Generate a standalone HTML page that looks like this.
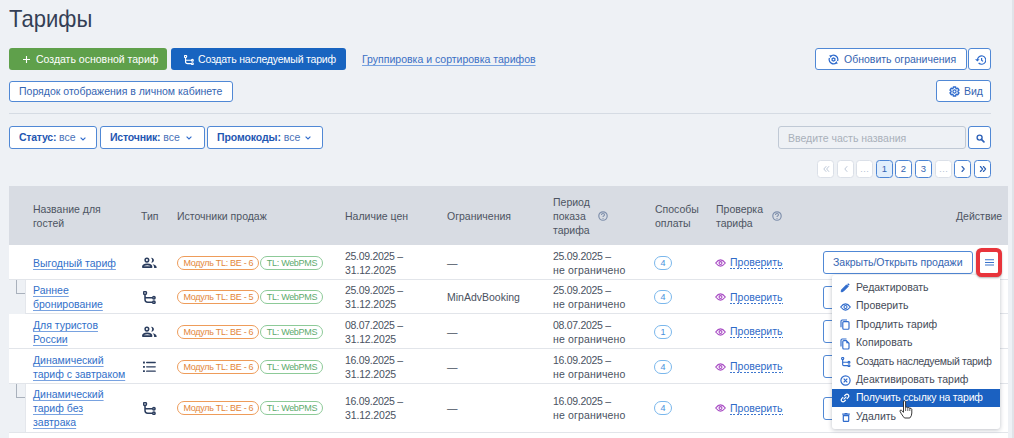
<!DOCTYPE html>
<html><head><meta charset="utf-8">
<style>
*{box-sizing:border-box;margin:0;padding:0}
html,body{width:1014px;height:438px;overflow:hidden;background:#eef1f5;font-family:"Liberation Sans",sans-serif;font-size:10.5px;color:#3b4453}
.a{position:absolute}
.btn{position:absolute;border-radius:3px;white-space:nowrap;line-height:14px}
.btn>span{position:absolute}
.btn>svg{position:absolute;display:block}
.ob{background:#fff;border:1px solid #5088d5;color:#3565b2}
.sep{position:absolute;height:1px;background:#d5dbe3}
.pg{position:absolute;top:160px;width:17px;height:18px;border:1px solid #4d85d4;border-radius:3.5px;background:#fff;color:#3565b2;font-size:9.5px;display:flex;align-items:center;justify-content:center;line-height:10px}
.pg.dis{border-color:#dbe0e8;color:#b4c1d3}
.pg.act{background:#e1eefc}
.th{position:absolute;color:#4d5462;line-height:14px;white-space:nowrap}
.row{position:absolute;left:9px;width:999px;background:#fff;border-bottom:1px solid #e2e5ea}
.row.child{left:25px;width:983px;border-left:1px solid #e4e7ec}
.cell{position:absolute;display:flex;align-items:center;line-height:14px;white-space:nowrap}
.lnk{color:#3270c9;text-decoration:underline;text-decoration-color:#78a2e0;text-decoration-thickness:1.2px;text-underline-offset:1.5px;text-decoration-skip-ink:none}
.bdg{display:inline-flex;align-items:center;height:14px;border-radius:7px;font-size:9px;letter-spacing:-0.3px;padding:0 5px 0 5.5px;margin-right:1px;line-height:12px}
.bo{border:1px solid #ee9c5a;color:#e3863a}
.bgn{border:1px solid #8dca98;color:#5daa6c}
.pay{display:inline-flex;align-items:center;justify-content:center;width:18px;height:14px;border:1px solid #7ab7ec;border-radius:7px;color:#4791dc;font-size:9px}
.chk{color:#2f6bc8;line-height:13px;margin-left:4px;padding-bottom:0px;background:repeating-linear-gradient(90deg,#3f78cf 0 2px,transparent 2px 3.5px) left bottom/100% 1px no-repeat}
.conn{position:absolute;left:16px;width:10px;height:14px;border-left:1px solid #a9b1bc;border-bottom:1px solid #a9b1bc}
.menu{position:absolute;left:832px;top:275px;width:168px;height:153.5px;background:#fff;border-radius:3px;box-shadow:0 1px 4px rgba(40,50,70,.3)}
.mi{position:absolute;left:0;width:168px;height:18px;color:#454b58;white-space:nowrap}
.mi svg{position:absolute;display:block}
.mi span{position:absolute;left:24px;top:1.3px;line-height:14px}
.mi.hl{background:#1b61c1;color:#fff}
</style></head><body>

<div class="a" style="left:9.4px;top:3.5px;font-size:24px;color:#343f55;line-height:30px;transform:scaleX(.918);transform-origin:0 0">Тарифы</div>

<div class="btn" style="left:9px;top:48px;width:158px;height:22px;background:#5fa04b;color:#fff">
  <svg style="left:13.5px;top:7.5px" width="7" height="7" viewBox="0 0 7 7"><path d="M3.5 0V7M0 3.5H7" stroke="#fff" stroke-width="1.1"/></svg>
  <span style="left:27px;top:4px">Создать основной тариф</span>
</div>
<div class="btn" style="left:171px;top:48px;width:175px;height:22px;background:#1864c0;color:#fff">
  <span style="left:13px;top:6.5px"><svg width="10" height="10" viewBox="0 0 13 13" style="display:block"><g fill="none" stroke="#fff" stroke-width="1.5"><circle cx="2" cy="2" r="1.5"/><path d="M2 3.5V8.6Q2 11.3 4.7 11.3H9.6M2 5.6Q2 6.8 3.2 6.8H9.6"/><circle cx="10.9" cy="6.8" r="1.2"/><circle cx="10.9" cy="11.3" r="1.2"/></g></svg></span>
  <span style="left:27px;top:4px;letter-spacing:-0.2px">Создать наследуемый тариф</span>
</div>
<div class="a lnk" style="left:362px;top:52px;line-height:14px;color:#3a6fc4">Группировка и сортировка тарифов</div>

<div class="btn ob" style="left:815px;top:48px;width:152px;height:22px">
  <svg style="left:12px;top:5px" width="11" height="11" viewBox="0 0 11 11"><g fill="none" stroke="#2f6bcc" stroke-width="1.25"><path d="M2.46 2.46A4.3 4.3 0 0 1 9.54 6.97"/><path d="M8.54 8.54A4.3 4.3 0 0 1 1.46 4.03"/></g><path d="M1.2 1.2L3.9 1.4L2.6 3.9Z M9.8 9.8L7.1 9.6L8.4 7.1Z" fill="#2f6bcc"/><path d="M5.5 3.2L7.5 4.35V6.65L5.5 7.8L3.5 6.65V4.35Z" fill="#2f6bcc"/><circle cx="5.5" cy="5.5" r=".85" fill="#fff"/></svg>
  <span style="left:28px;top:3px">Обновить ограничения</span>
</div>
<div class="btn ob" style="left:968px;top:48px;width:23px;height:22px">
  <svg style="left:6px;top:6px" width="11" height="10" viewBox="0 0 11 10"><g fill="none" stroke="#2f6bcc" stroke-width="1.2"><path d="M2.4 5A4.2 4.2 0 1 1 3.6 8"/><path d="M6.6 3V5.2L8 6.4"/></g><path d="M0 4.2L2.4 6.6L4.6 4.2Z" fill="#2f6bcc"/></svg>
</div>

<div class="btn ob" style="left:9px;top:80.7px;width:223.5px;height:21.5px">
  <span style="left:9px;top:2.6px">Порядок отображения в личном кабинете</span>
</div>
<div class="btn ob" style="left:936px;top:80px;width:55px;height:22px">
  <svg style="left:11.5px;top:5px" width="11" height="11" viewBox="0 0 24 24"><path d="M9.15 4.95 L9.53 2.10 L14.47 2.10 L14.85 4.95 L16.68 6.01 L19.34 4.91 L21.80 9.19 L19.53 10.94 L19.53 13.06 L21.80 14.81 L19.34 19.09 L16.68 17.99 L14.85 19.05 L14.47 21.90 L9.53 21.90 L9.15 19.05 L7.32 17.99 L4.66 19.09 L2.20 14.81 L4.47 13.06 L4.47 10.94 L2.20 9.19 L4.66 4.91 L7.32 6.01Z" fill="none" stroke="#2f6bcc" stroke-width="3" stroke-linejoin="round"/><circle cx="12" cy="12" r="3.4" fill="none" stroke="#2f6bcc" stroke-width="2.6"/></svg>
  <span style="left:27px;top:3px">Вид</span>
</div>

<div class="sep" style="left:9px;top:113px;width:982px"></div>

<div class="btn ob" style="left:9px;top:126px;width:88px;height:23px">
  <span style="left:9px;top:3.3px;color:#1f57b2"><b style="letter-spacing:-0.25px">Статус:</b> <span style="color:#4a72b8">все</span></span>
  <svg style="left:70px;top:9.5px" width="6" height="4" viewBox="0 0 6 4"><path d="M.6 .6L3 3L5.4 .6" fill="none" stroke="#2f6bcc" stroke-width="1.1"/></svg>
</div>
<div class="btn ob" style="left:100px;top:126px;width:105px;height:23px">
  <span style="left:9px;top:3.3px;color:#1f57b2"><b style="letter-spacing:-0.2px">Источник:</b> <span style="color:#4a72b8">все</span></span>
  <svg style="left:84.5px;top:9px" width="6" height="4" viewBox="0 0 6 4"><path d="M.6 .6L3 3L5.4 .6" fill="none" stroke="#2f6bcc" stroke-width="1.1"/></svg>
</div>
<div class="btn ob" style="left:207px;top:126px;width:116px;height:23px">
  <span style="left:9px;top:3.3px;color:#1f57b2"><b style="letter-spacing:-0.1px">Промокоды:</b> <span style="color:#4a72b8">все</span></span>
  <svg style="left:97px;top:9px" width="6" height="4" viewBox="0 0 6 4"><path d="M.6 .6L3 3L5.4 .6" fill="none" stroke="#2f6bcc" stroke-width="1.1"/></svg>
</div>

<div class="btn" style="left:778px;top:126px;width:188px;height:23px;border:1px solid #c0c9d5;background:#eef1f5;color:#a9b0ba">
  <span style="left:9px;top:4px">Введите часть названия</span>
</div>
<div class="btn ob" style="left:968px;top:126px;width:23px;height:23px">
  <svg style="left:6.5px;top:6.5px" width="9" height="9" viewBox="0 0 9 9"><circle cx="3.6" cy="3.6" r="2.5" fill="none" stroke="#2f62b8" stroke-width="1.35"/><path d="M5.4 5.4L7.9 7.9" stroke="#2f62b8" stroke-width="1.7" stroke-linecap="round"/></svg>
</div>

<div class="pg dis" style="left:817px"><svg width="8" height="8" viewBox="0 0 8 8" style="display:block"><path d="M4 1.5L1.8 4L4 6.5M6.8 1.5L4.6 4L6.8 6.5" fill="none" stroke="#b4c1d3" stroke-width="0.9" stroke-linecap="round" stroke-linejoin="round"/></svg></div>
<div class="pg dis" style="left:837px"><svg width="8" height="8" viewBox="0 0 8 8" style="display:block"><path d="M5 1.5L2.8 4L5 6.5" fill="none" stroke="#b4c1d3" stroke-width="0.9" stroke-linecap="round" stroke-linejoin="round"/></svg></div>
<div class="pg dis" style="left:856px">…</div>
<div class="pg act" style="left:876px">1</div>
<div class="pg" style="left:895px">2</div>
<div class="pg" style="left:915px">3</div>
<div class="pg dis" style="left:935px">…</div>
<div class="pg" style="left:954px"><svg width="8" height="8" viewBox="0 0 8 8" style="display:block"><path d="M3 1.5L5.2 4L3 6.5" fill="none" stroke="#2f62b5" stroke-width="1.15" stroke-linecap="round" stroke-linejoin="round"/></svg></div>
<div class="pg" style="left:974px"><svg width="8" height="8" viewBox="0 0 8 8" style="display:block"><path d="M1.4 1.5L3.6 4L1.4 6.5M4.4 1.5L6.6 4L4.4 6.5" fill="none" stroke="#2f62b5" stroke-width="1.15" stroke-linecap="round" stroke-linejoin="round"/></svg></div>

<div class="a" style="left:9px;top:186px;width:999px;height:59.5px;background:#d8dce3"></div>
<div class="th" style="left:33px;top:202px">Название для<br>гостей</div>
<div class="th" style="left:141px;top:209px">Тип</div>
<div class="th" style="left:177px;top:209px">Источники продаж</div>
<div class="th" style="left:345px;top:209px">Наличие цен</div>
<div class="th" style="left:447px;top:209px">Ограничения</div>
<div class="th" style="left:553px;top:195px">Период<br>показа<br>тарифа</div>
<svg class="a" style="left:598px;top:211px" width="10" height="10" viewBox="0 0 10 10"><circle cx="5" cy="5" r="4.2" fill="none" stroke="#7d8eab" stroke-width="1.15"/><path d="M3.5 3.9Q3.5 2.4 5 2.4Q6.5 2.4 6.5 3.8Q6.5 4.6 5.6 5Q5 5.3 5 6.1" fill="none" stroke="#7d8eab" stroke-width="1.05"/><circle cx="5" cy="7.5" r=".6" fill="#7d8eab"/></svg>
<div class="th" style="left:655px;top:202px">Способы<br>оплаты</div>
<div class="th" style="left:716px;top:202px">Проверка<br>тарифа</div>
<svg class="a" style="left:772px;top:211px" width="10" height="10" viewBox="0 0 10 10"><circle cx="5" cy="5" r="4.2" fill="none" stroke="#7d8eab" stroke-width="1.15"/><path d="M3.5 3.9Q3.5 2.4 5 2.4Q6.5 2.4 6.5 3.8Q6.5 4.6 5.6 5Q5 5.3 5 6.1" fill="none" stroke="#7d8eab" stroke-width="1.05"/><circle cx="5" cy="7.5" r=".6" fill="#7d8eab"/></svg>
<div class="th" style="left:956px;top:209px">Действие</div>

<div class="row" style="top:245px;height:35px">
</div>
<div class="cell" style="left:33px;top:245px;height:35px;"><span class="lnk">Выгодный тариф</span></div>
<div class="cell" style="left:142px;top:245px;height:35px;"><svg width="15" height="11" viewBox="0 0 15 11" style="display:block"><circle cx="4.9" cy="3.1" r="1.8" fill="none" stroke="#2b3d5e" stroke-width="1.5"/><path d="M9.1 0.9A2.35 2.35 0 1 1 9.1 5.5A3 3 0 0 0 9.1 0.9Z" fill="#2b3d5e"/><path d="M0.9 10.1Q0.9 7.3 5.2 7.3Q9.5 7.3 9.5 10.1Z" fill="none" stroke="#2b3d5e" stroke-width="1.8" stroke-linejoin="round"/><path d="M10.6 7.2Q14.7 7.8 14.7 10.9H12.2Q12.2 8.5 10.6 7.2Z" fill="#2b3d5e"/></svg></div>
<div class="cell" style="left:177px;top:245px;height:35px;"><span class="bdg bo">Модуль TL: BE - 6</span><span class="bdg bgn">TL: WebPMS</span></div>
<div class="cell" style="left:345px;top:245px;height:35px;color:#4a5261"><span><span style="letter-spacing:-0.3px">25.09.2025 –</span><br><span style="letter-spacing:-0.15px">31.12.2025</span></span></div>
<div class="cell" style="left:447px;top:245px;height:35px;color:#4a5261">—</div>
<div class="cell" style="left:553px;top:245px;height:35px;color:#4a5261"><span><span style="letter-spacing:-0.3px">25.09.2025 –</span><br><span style="letter-spacing:0.15px">не ограничено</span></span></div>
<div class="cell" style="left:654px;top:245px;height:35px;"><span class="pay">4</span></div>
<div class="cell" style="left:715px;top:245px;height:35px;"><svg width="11" height="8" viewBox="0 0 11 8" style="display:block"><path d="M0.7 4Q5.5 -2.2 10.3 4Q5.5 10.2 0.7 4Z" fill="none" stroke="#a84cc4" stroke-width="1.2"/><circle cx="5.5" cy="4" r="1.45" fill="none" stroke="#a84cc4" stroke-width="1.15"/></svg><span class="chk">Проверить</span></div>
<div class="ob" style="position:absolute;left:823px;top:251px;width:150px;height:23px;border-radius:3px;line-height:21px;padding-left:9px;white-space:nowrap">Закрыть/Открыть продажи</div>
<div class="conn" style="top:280px"></div>
<div class="row child" style="top:280px;height:34px">
</div>
<div class="cell" style="left:33px;top:280px;height:34px;"><span class="lnk">Раннее<br>бронирование</span></div>
<div class="cell" style="left:143px;top:280px;height:34px;"><svg width="13" height="13" viewBox="0 0 13 13" style="display:block"><g fill="none" stroke="#2b3d5e" stroke-width="1.5"><circle cx="2" cy="2" r="1.5"/><path d="M2 3.5V8.6Q2 11.3 4.7 11.3H9.6M2 5.6Q2 6.8 3.2 6.8H9.6"/><circle cx="10.9" cy="6.8" r="1.2"/><circle cx="10.9" cy="11.3" r="1.2"/></g></svg></div>
<div class="cell" style="left:177px;top:280px;height:34px;"><span class="bdg bo">Модуль TL: BE - 5</span><span class="bdg bgn">TL: WebPMS</span></div>
<div class="cell" style="left:345px;top:280px;height:34px;color:#4a5261"><span><span style="letter-spacing:-0.3px">25.09.2025 –</span><br><span style="letter-spacing:-0.15px">31.12.2025</span></span></div>
<div class="cell" style="left:447px;top:280px;height:34px;color:#4a5261">MinAdvBooking</div>
<div class="cell" style="left:553px;top:280px;height:34px;color:#4a5261"><span><span style="letter-spacing:-0.3px">25.09.2025 –</span><br><span style="letter-spacing:0.15px">не ограничено</span></span></div>
<div class="cell" style="left:654px;top:280px;height:34px;"><span class="pay">4</span></div>
<div class="cell" style="left:715px;top:280px;height:34px;"><svg width="11" height="8" viewBox="0 0 11 8" style="display:block"><path d="M0.7 4Q5.5 -2.2 10.3 4Q5.5 10.2 0.7 4Z" fill="none" stroke="#a84cc4" stroke-width="1.2"/><circle cx="5.5" cy="4" r="1.45" fill="none" stroke="#a84cc4" stroke-width="1.15"/></svg><span class="chk">Проверить</span></div>
<div class="ob" style="position:absolute;left:823px;top:285.5px;width:150px;height:23px;border-radius:3px"></div>
<div class="row" style="top:314px;height:35px">
</div>
<div class="cell" style="left:33px;top:314px;height:35px;"><span class="lnk">Для туристов<br>России</span></div>
<div class="cell" style="left:142px;top:314px;height:35px;"><svg width="15" height="11" viewBox="0 0 15 11" style="display:block"><circle cx="4.9" cy="3.1" r="1.8" fill="none" stroke="#2b3d5e" stroke-width="1.5"/><path d="M9.1 0.9A2.35 2.35 0 1 1 9.1 5.5A3 3 0 0 0 9.1 0.9Z" fill="#2b3d5e"/><path d="M0.9 10.1Q0.9 7.3 5.2 7.3Q9.5 7.3 9.5 10.1Z" fill="none" stroke="#2b3d5e" stroke-width="1.8" stroke-linejoin="round"/><path d="M10.6 7.2Q14.7 7.8 14.7 10.9H12.2Q12.2 8.5 10.6 7.2Z" fill="#2b3d5e"/></svg></div>
<div class="cell" style="left:177px;top:314px;height:35px;"><span class="bdg bo">Модуль TL: BE - 6</span><span class="bdg bgn">TL: WebPMS</span></div>
<div class="cell" style="left:345px;top:314px;height:35px;color:#4a5261"><span><span style="letter-spacing:-0.3px">08.07.2025 –</span><br><span style="letter-spacing:-0.15px">31.12.2025</span></span></div>
<div class="cell" style="left:447px;top:314px;height:35px;color:#4a5261">—</div>
<div class="cell" style="left:553px;top:314px;height:35px;color:#4a5261"><span><span style="letter-spacing:-0.3px">08.07.2025 –</span><br><span style="letter-spacing:0.15px">не ограничено</span></span></div>
<div class="cell" style="left:654px;top:314px;height:35px;"><span class="pay">1</span></div>
<div class="cell" style="left:715px;top:314px;height:35px;"><svg width="11" height="8" viewBox="0 0 11 8" style="display:block"><path d="M0.7 4Q5.5 -2.2 10.3 4Q5.5 10.2 0.7 4Z" fill="none" stroke="#a84cc4" stroke-width="1.2"/><circle cx="5.5" cy="4" r="1.45" fill="none" stroke="#a84cc4" stroke-width="1.15"/></svg><span class="chk">Проверить</span></div>
<div class="ob" style="position:absolute;left:823px;top:320.0px;width:150px;height:23px;border-radius:3px"></div>
<div class="row" style="top:349px;height:35px">
</div>
<div class="cell" style="left:33px;top:349px;height:35px;"><span class="lnk">Динамический<br>тариф с завтраком</span></div>
<div class="cell" style="left:143px;top:349px;height:35px;"><svg width="13" height="11" viewBox="0 0 13 11" style="display:block"><g fill="#2b3d5e"><rect x="0" y="0.6" width="1.9" height="1.9" rx=".3"/><rect x="0" y="4.9" width="1.9" height="1.9" rx=".3"/><rect x="0" y="9.2" width="1.9" height="1.9" rx=".3"/><rect x="3" y="0.85" width="9.9" height="1.4" rx=".7"/><rect x="3" y="5.15" width="9.9" height="1.4" rx=".7"/><rect x="3" y="9.45" width="9.9" height="1.4" rx=".7"/></g></svg></div>
<div class="cell" style="left:177px;top:349px;height:35px;"><span class="bdg bo">Модуль TL: BE - 6</span><span class="bdg bgn">TL: WebPMS</span></div>
<div class="cell" style="left:345px;top:349px;height:35px;color:#4a5261"><span><span style="letter-spacing:-0.3px">16.09.2025 –</span><br><span style="letter-spacing:-0.15px">31.12.2025</span></span></div>
<div class="cell" style="left:447px;top:349px;height:35px;color:#4a5261">—</div>
<div class="cell" style="left:553px;top:349px;height:35px;color:#4a5261"><span><span style="letter-spacing:-0.3px">16.09.2025 –</span><br><span style="letter-spacing:0.15px">не ограничено</span></span></div>
<div class="cell" style="left:654px;top:349px;height:35px;"><span class="pay">4</span></div>
<div class="cell" style="left:715px;top:349px;height:35px;"><svg width="11" height="8" viewBox="0 0 11 8" style="display:block"><path d="M0.7 4Q5.5 -2.2 10.3 4Q5.5 10.2 0.7 4Z" fill="none" stroke="#a84cc4" stroke-width="1.2"/><circle cx="5.5" cy="4" r="1.45" fill="none" stroke="#a84cc4" stroke-width="1.15"/></svg><span class="chk">Проверить</span></div>
<div class="ob" style="position:absolute;left:823px;top:355.0px;width:150px;height:23px;border-radius:3px"></div>
<div class="conn" style="top:384px"></div>
<div class="row child" style="top:384px;height:48.5px">
</div>
<div class="cell" style="left:33px;top:384px;height:48.5px;"><span class="lnk">Динамический<br>тариф без<br>завтрака</span></div>
<div class="cell" style="left:143px;top:384px;height:48.5px;"><svg width="13" height="13" viewBox="0 0 13 13" style="display:block"><g fill="none" stroke="#2b3d5e" stroke-width="1.5"><circle cx="2" cy="2" r="1.5"/><path d="M2 3.5V8.6Q2 11.3 4.7 11.3H9.6M2 5.6Q2 6.8 3.2 6.8H9.6"/><circle cx="10.9" cy="6.8" r="1.2"/><circle cx="10.9" cy="11.3" r="1.2"/></g></svg></div>
<div class="cell" style="left:177px;top:384px;height:48.5px;"><span class="bdg bo">Модуль TL: BE - 6</span><span class="bdg bgn">TL: WebPMS</span></div>
<div class="cell" style="left:345px;top:384px;height:48.5px;color:#4a5261"><span><span style="letter-spacing:-0.3px">16.09.2025 –</span><br><span style="letter-spacing:-0.15px">31.12.2025</span></span></div>
<div class="cell" style="left:447px;top:384px;height:48.5px;color:#4a5261">—</div>
<div class="cell" style="left:553px;top:384px;height:48.5px;color:#4a5261"><span><span style="letter-spacing:-0.3px">16.09.2025 –</span><br><span style="letter-spacing:0.15px">не ограничено</span></span></div>
<div class="cell" style="left:654px;top:384px;height:48.5px;"><span class="pay">4</span></div>
<div class="cell" style="left:715px;top:384px;height:48.5px;"><svg width="11" height="8" viewBox="0 0 11 8" style="display:block"><path d="M0.7 4Q5.5 -2.2 10.3 4Q5.5 10.2 0.7 4Z" fill="none" stroke="#a84cc4" stroke-width="1.2"/><circle cx="5.5" cy="4" r="1.45" fill="none" stroke="#a84cc4" stroke-width="1.15"/></svg><span class="chk">Проверить</span></div>
<div class="ob" style="position:absolute;left:823px;top:396.75px;width:150px;height:23px;border-radius:3px"></div>
<div class="row" style="top:432px;height:20px;border-top:1px solid #e2e5ea"></div>



<div class="menu">
  <div class="mi" style="top:4px"><svg style="left:8px;top:4px" width="10" height="10" viewBox="0 0 10 10"><path d="M1.2 8.8L1.5 6.9L6.6 1.8L8.2 3.4L3.1 8.5Z" fill="#2f6bcc" stroke="#2f6bcc" stroke-width="1" stroke-linejoin="round"/><path d="M7.2 1.2L7.9 .6Q8.3 .3 8.7 .6L9.4 1.3Q9.7 1.7 9.4 2.1L8.8 2.8Z" fill="#2f6bcc"/></svg><span>Редактировать</span></div>
  <div class="mi" style="top:22px"><span style="left:8px;top:6px"><svg width="11" height="8" viewBox="0 0 11 8" style="display:block"><path d="M0.7 4Q5.5 -2.2 10.3 4Q5.5 10.2 0.7 4Z" fill="none" stroke="#2f6bcc" stroke-width="1.2"/><circle cx="5.5" cy="4" r="1.5" fill="none" stroke="#2f6bcc" stroke-width="1.1"/></svg></span><span>Проверить</span></div>
  <div class="mi" style="top:41px"><svg style="left:8px;top:3.2px" width="10" height="11" viewBox="0 0 10 11"><g fill="none" stroke="#2f6bcc" stroke-width="1.15"><path d="M1 8.2V2.2Q1 1 2.2 1H7"/><rect x="2.8" y="2.6" width="6.2" height="7.6" rx="1"/></g></svg><span>Продлить тариф</span></div>
  <div class="mi" style="top:59px"><svg style="left:8px;top:3.5px" width="10" height="12" viewBox="0 0 10 12"><g fill="none" stroke="#2f6bcc" stroke-width="1.15"><path d="M1 8.5V2.2Q1 1 2.2 1H6.5"/><path d="M2.8 3.6Q2.8 2.6 3.8 2.6H6.3L9 5.3V10Q9 11 8 11H3.8Q2.8 11 2.8 10Z"/></g><path d="M6.3 2.6V5.3H9Z" fill="#2f6bcc"/></svg><span>Копировать</span></div>
  <div class="mi" style="top:78px"><span style="left:9px;top:4px"><svg width="9.5" height="10" viewBox="0 0 12 13" style="display:block"><g fill="none" stroke="#2f6bcc" stroke-width="1.5"><circle cx="2" cy="2" r="1.4"/><path d="M2 3.4V9.9Q2 11.3 3.4 11.3H9M2 6.8H9"/><circle cx="10.2" cy="6.8" r="1.2"/><circle cx="10.2" cy="11.3" r="1.2"/></g></svg></span><span style="letter-spacing:-0.3px">Создать наследуемый тариф</span></div>
  <div class="mi" style="top:96px"><svg style="left:8px;top:4px" width="11" height="11" viewBox="0 0 11 11"><g fill="none" stroke="#2f6bcc" stroke-width="1.2"><circle cx="5.5" cy="5.5" r="4.6"/><path d="M3.7 3.7L7.3 7.3M7.3 3.7L3.7 7.3"/></g></svg><span>Деактивировать тариф</span></div>
  <div class="mi hl" style="top:114px"><svg style="left:8px;top:4px" width="10" height="10" viewBox="0 0 10 10"><g fill="none" stroke="#fff" stroke-width="1.2"><path d="M4.2 3.2L5.6 1.8Q7 .6 8.3 1.8Q9.4 3 8.2 4.4L6.8 5.8"/><path d="M5.8 6.8L4.4 8.2Q3 9.4 1.7 8.2Q.6 7 1.8 5.6L3.2 4.2"/><path d="M3.6 6.4L6.4 3.6"/></g></svg><span style="letter-spacing:-0.2px">Получить ссылку на тариф</span></div>
  <div class="mi" style="top:133px"><svg style="left:9.5px;top:4.5px" width="8" height="9" viewBox="0 0 8 9"><g fill="none" stroke="#2f6bcc" stroke-width="1.2"><path d="M1.3 2.6V7.8Q1.3 8.4 1.9 8.4H6.1Q6.7 8.4 6.7 7.8V2.6Z"/><path d="M0.2 1.2H7.8M2.6 .5H5.4"/></g></svg><span>Удалить</span></div>
</div>

<div class="a" style="left:976px;top:248px;width:26px;height:28.5px;border:4px solid #e8343b;border-radius:5.5px;background:#fff;box-shadow:0 1px 2px rgba(0,0,0,.3)"></div>
<svg class="a" style="left:985px;top:259.2px" width="9" height="7" viewBox="0 0 9 7"><path d="M0 .8H9M0 3.4H9M0 6H9" stroke="#3a74cc" stroke-width="1.05"/></svg>
<div class="a" style="left:1012px;top:0;width:2px;height:438px;background:#e0e4e9"></div>
<svg class="a" style="left:898.5px;top:400px" width="15" height="19" viewBox="0 0 15 19"><path d="M4.5 1.2Q5.8 .4 6.6 1.5V7.5Q7.8 6.6 8.8 7.5Q10 7 10.8 8.2Q12.2 7.9 12.8 9.2V13Q12.8 16 10.8 18H5.5Q4 16.5 2.2 13.5L1 11.2Q.8 9.8 2.3 10.2L4.5 12.3Z" fill="#fff" stroke="#222" stroke-width="0.9"/><path d="M6.6 7.5V11M8.8 7.5V11M10.8 8.2V11" stroke="#222" stroke-width="0.7"/></svg>

</body></html>
